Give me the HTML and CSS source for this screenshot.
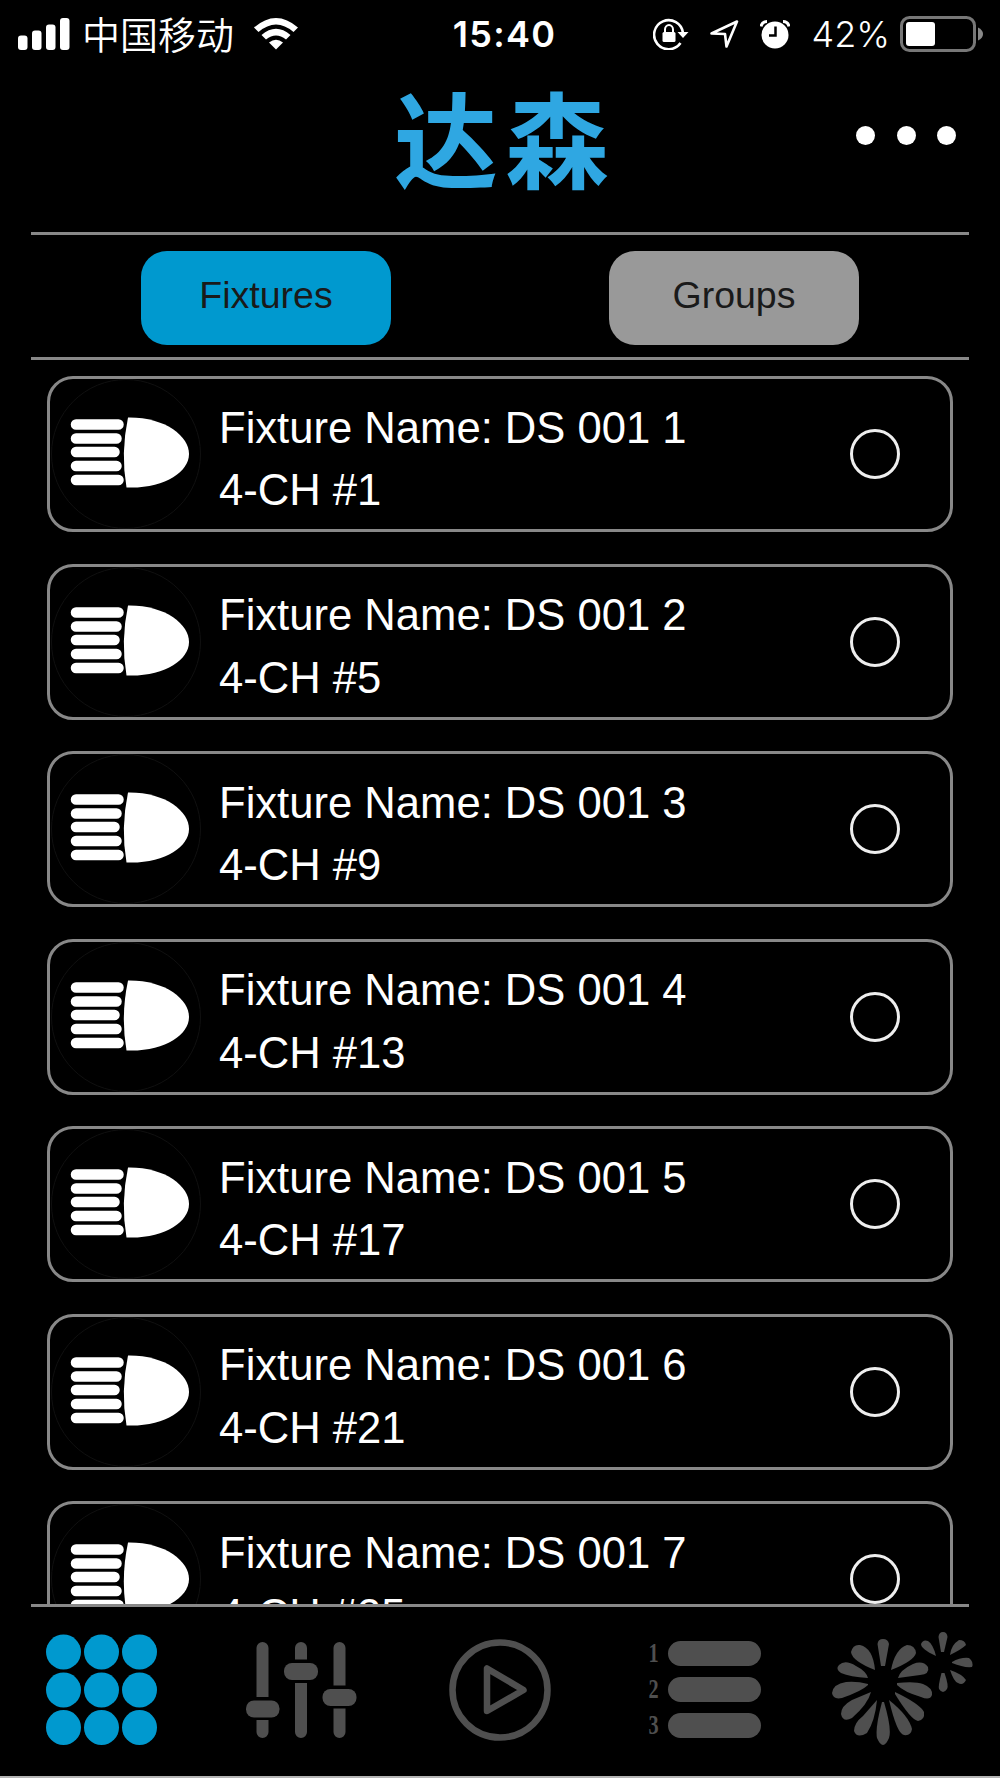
FILE: index.html
```html
<!DOCTYPE html>
<html lang="en">
<head>
    <meta charset="UTF-8">
    <meta name="viewport" content="width=device-width, initial-scale=1.0">
    <title>达森</title>
    <link rel="stylesheet" href="styles.css">
</head>
<body>
    <svg class="sprite" width="0" height="0">
        <symbol id="lamp" viewBox="0 0 150 150">
            <circle class="lamp-ring" cx="75" cy="75" r="74.5"/>
            <path class="lamp-beams" d="M25 45.500H67.500M25 59.500H65.500M25 73H63.500M25 87H65.500M25 101H67.500"/>
            <path d="M77 38.500C114 38 138 57 138 75C138 93 113 110 75.500 108.500Q69.500 74 77 38.500Z"/>
        </symbol>
    </svg>
    <div class="app">
        <div class="status-bar">
            <div class="status-left">
                <svg class="signal" width="52" height="32" viewBox="0 0 52 32">
                    <rect x="0" y="17.5" width="9.5" height="14.5" rx="3"/>
                    <rect x="14" y="12.5" width="9.5" height="19.5" rx="3"/>
                    <rect x="28" y="6.5" width="9.5" height="25.5" rx="3"/>
                    <rect x="42" y="0" width="9.5" height="32" rx="3"/>
                </svg>
                <span class="carrier">中国移动</span>
                <svg class="wifi" width="44" height="32" viewBox="0 0 44 32">
                    <path d="M0 9.5Q22 -9.5 44 9.5L39.5 14Q22 -1 4.500 14Z"/>
                    <path d="M7.500 17Q22 4.500 36.500 17L32 21.500Q22 13.500 12 21.500Z"/>
                    <path d="M15 24.500Q22 19 29 24.500L22 31.500Z"/>
                </svg>
            </div>
            <div class="time">15:40</div>
            <div class="status-right">
                <svg width="36" height="32" viewBox="0 0 36 32">
                    <path class="line" d="M27.500 25A14.500 14.500 0 1 1 30 15"/>
                    <path d="M24.500 14H35.500L30 20Z"/>
                    <rect x="9.500" y="14" width="13" height="10" rx="1.500"/>
                    <path class="line thin" d="M12 14V11.500A4 4.500 0 0 1 20 11.500V14"/>
                </svg>
                <svg class="location" width="29" height="29" viewBox="0 0 29 29">
                    <path class="line" d="M1.500 13.500L27 1.500L16.500 26.500L15 14Z"/>
                </svg>
                <svg class="alarm" width="30" height="29" viewBox="0 0 30 29">
                    <circle cx="15" cy="15" r="13.500"/>
                    <path d="M1 6.500Q2 1.500 7 1.500M29 6.500Q28 1.500 23 1.500"/>
                    <path class="hands" d="M15.500 6.500V15.500H9"/>
                </svg>
                <span class="percent">42%</span>
                <svg class="battery" width="84" height="36" viewBox="0 0 84 36">
                    <rect class="battery-case" x="1.500" y="1.500" width="73" height="33" rx="8"/>
                    <rect x="6" y="6" width="29" height="24" rx="3"/>
                    <path class="battery-tip" d="M78 11.500Q83 14 83 18Q83 22 78 24.500Z"/>
                </svg>
            </div>
        </div>

        <div class="header">
            <h1 class="logo">达森</h1>
            <div class="more">
                <span></span>
                <span></span>
                <span></span>
            </div>
        </div>

        <div class="tabs">
            <button class="tab active">Fixtures</button>
            <button class="tab">Groups</button>
        </div>

        <div class="fixture-list">
            <div class="fixture">
                <svg class="fixture-icon"><use href="#lamp"/></svg>
                <div class="fixture-text"><p>Fixture Name: DS 001 1</p><p>4-CH #1</p></div>
                <span class="radio"></span>
            </div>
            <div class="fixture">
                <svg class="fixture-icon"><use href="#lamp"/></svg>
                <div class="fixture-text"><p>Fixture Name: DS 001 2</p><p>4-CH #5</p></div>
                <span class="radio"></span>
            </div>
            <div class="fixture">
                <svg class="fixture-icon"><use href="#lamp"/></svg>
                <div class="fixture-text"><p>Fixture Name: DS 001 3</p><p>4-CH #9</p></div>
                <span class="radio"></span>
            </div>
            <div class="fixture">
                <svg class="fixture-icon"><use href="#lamp"/></svg>
                <div class="fixture-text"><p>Fixture Name: DS 001 4</p><p>4-CH #13</p></div>
                <span class="radio"></span>
            </div>
            <div class="fixture">
                <svg class="fixture-icon"><use href="#lamp"/></svg>
                <div class="fixture-text"><p>Fixture Name: DS 001 5</p><p>4-CH #17</p></div>
                <span class="radio"></span>
            </div>
            <div class="fixture">
                <svg class="fixture-icon"><use href="#lamp"/></svg>
                <div class="fixture-text"><p>Fixture Name: DS 001 6</p><p>4-CH #21</p></div>
                <span class="radio"></span>
            </div>
            <div class="fixture">
                <svg class="fixture-icon"><use href="#lamp"/></svg>
                <div class="fixture-text"><p>Fixture Name: DS 001 7</p><p>4-CH #25</p></div>
                <span class="radio"></span>
            </div>
        </div>

        <div class="nav">
            <svg class="nav-grid" width="112" height="112" viewBox="0 0 112 112">
                <circle cx="17.500" cy="18" r="17.500"/>
                <circle cx="55.500" cy="18" r="17.500"/>
                <circle cx="93.500" cy="18" r="17.500"/>
                <circle cx="17.500" cy="56" r="17.500"/>
                <circle cx="55.500" cy="56" r="17.500"/>
                <circle cx="93.500" cy="56" r="17.500"/>
                <circle cx="17.500" cy="93.500" r="17.500"/>
                <circle cx="55.500" cy="93.500" r="17.500"/>
                <circle cx="93.500" cy="93.500" r="17.500"/>
            </svg>
            <svg width="112" height="96" viewBox="0 0 112 96">
                <path d="M10.500 55V6a6 6 0 0 1 12 0V55ZM10.500 78H22.500V90a6 6 0 0 1 -12 0Z"/>
                <path d="M49 17.500V6a6 6 0 0 1 12 0V17.500ZM49 41H61V90a6 6 0 0 1 -12 0Z"/>
                <path d="M87.500 43.500V6a6 6 0 0 1 12 0V43.500ZM87.500 66.500H99.500V90a6 6 0 0 1 -12 0Z"/>
                <rect x="0" y="58.500" width="33.500" height="17" rx="8"/>
                <rect x="38" y="21" width="34" height="17" rx="8"/>
                <rect x="76.500" y="47" width="34" height="17" rx="8"/>
            </svg>
            <svg width="102" height="102" viewBox="0 0 102 102">
                <circle class="play" cx="51" cy="51" r="47.500"/>
                <path class="play" d="M38 29.500V72L74.500 51Z"/>
            </svg>
            <div class="scenes">
                <span>1</span><i></i>
                <span>2</span><i></i>
                <span>3</span><i></i>
            </div>
            <svg class="burst" width="142" height="116" viewBox="0 0 142 116">
                <path d="M49 34L45.500 12Q46 7 51 7Q56 7 57 12L53 34Z"/>
                <path d="M43 38Q20 29 19 20Q21 12 28 13Q41 16 43 38Z"/>
                <path d="M59 38Q63 17 75 13Q83 13 84 21Q82 29 59 38Z"/>
                <path d="M36 46Q18 45 9 41Q3 37 7 33Q13 27 24 34Q34 39 36 46Z"/>
                <path d="M66 46Q68 38 81 32Q91 28 96 35Q98 42 88 43Z"/>
                <path d="M36 53Q30 59 10 66Q1 68 0 61Q1 52 14 50Q25 49 36 52Z"/>
                <path d="M65 51Q83 49 91 52Q101 56 100 63Q98 69 89 65Q72 60 65 53Z"/>
                <path d="M39 60Q36 72 20 86Q11 91 9 82Q9 74 20 68Z"/>
                <path d="M63 60Q88 72 92 80Q93 88 86 89Q79 88 63 62Z"/>
                <path d="M45 68Q43 89 35 101Q25 107 22 99Q22 91 31 84Z"/>
                <path d="M57 68Q77 84 80 97Q79 104 72 103Q65 102 57 68Z"/>
                <path d="M50 70Q43 96 45 106Q51 120 57 106Q60 97 52 70Z"/>
                <path d="M109 20L106.500 5Q107 0 111 0Q115 0 115.500 5L112 20Z"/>
                <path d="M104 24Q89 17 89 12Q91 7 96 9Q101 12 104 24Z"/>
                <path d="M118 23Q119 13 127 8Q133 8 134 13Q130 17 118 23Z"/>
                <path d="M120 30Q129 25 137 26Q142 30 140 35Q132 36 120 31Z"/>
                <path d="M118 38Q130 42 134 48Q131 54 126 51Q122 50 118 38Z"/>
                <path d="M109.500 41Q106 54 107 57Q111 63 115 57Q117 54 112.500 41Z"/>
            </svg>
        </div>
    </div>
</body>
</html>
```
FILE: styles.css
```css
* {
    box-sizing: border-box;
}
body {
    margin: 0;
    background: #000;
    color: #fff;
    font-family: "Liberation Sans", Arial, sans-serif;
}
svg {
    display: block;
    flex: none;
    fill: #fff;
}
.sprite {
    position: absolute;
}
.app {
    height: 1778px;
    display: flex;
    flex-direction: column;
    border-bottom: 2px solid #b5b5b5;
    overflow: hidden;
}
.status-bar {
    height: 66px;
    padding: 0 16px 0 18px;
    display: grid;
    grid-template-columns: 1fr auto 1fr;
    align-items: center;
    font-family: Inter, "Noto Sans CJK SC", sans-serif;
    font-size: 36px;
    line-height: 66px;
}
.status-left,
.status-right {
    display: flex;
    align-items: center;
}
.status-right {
    justify-content: flex-end;
}
.carrier {
    margin-left: 12px;
    height: 68px;
    font-family: "Noto Sans CJK SC", sans-serif;
    font-size: 38px;
    font-weight: 350;
}
.wifi {
    margin-left: 20px;
}
.time {
    margin-left: 7px;
    font-weight: 600;
    letter-spacing: 1.3px;
}
.line {
    fill: none;
    stroke: #fff;
    stroke-width: 2.6;
    stroke-linejoin: round;
}
.thin {
    stroke-width: 2;
}
.location {
    margin-left: 21px;
}
.alarm {
    margin-left: 21px;
}
.alarm path {
    fill: none;
    stroke: #fff;
    stroke-width: 3;
}
.alarm .hands {
    stroke: #000;
    stroke-width: 2.5;
}
.percent {
    margin-left: 22px;
    font-weight: 350;
}
.battery {
    margin-left: 10px;
}
.battery-case {
    fill: none;
    stroke: #777;
    stroke-width: 3;
}
.battery-tip {
    fill: #888;
}
.header {
    height: 166px;
    margin: 0 31px;
    padding-right: 13px;
    display: grid;
    grid-template-columns: 1fr auto 1fr;
}
.logo {
    grid-column: 2;
    margin: 0 0 0 23px;
    font-family: "Noto Sans CJK SC", sans-serif;
    font-size: 104px;
    font-weight: 700;
    letter-spacing: 7px;
    line-height: 140px;
    color: #2fa7e2;
}
.more {
    display: flex;
    justify-content: flex-end;
    gap: 21.5px;
    padding-top: 60px;
}
.more span {
    width: 19px;
    height: 19px;
    border-radius: 50%;
    background: #fff;
}
.tabs {
    height: 128px;
    margin: 0 31px;
    padding: 3px 110px 0;
    display: flex;
    justify-content: space-between;
    align-items: center;
    border-top: 3px solid #888;
    border-bottom: 3px solid #888;
}
.tab {
    width: 250px;
    height: 94px;
    padding: 0 0 4px;
    border: 0;
    border-radius: 26px;
    background: #999;
    color: #1a1a1a;
    font-family: inherit;
    font-size: 37.5px;
}
.tab.active {
    background: #0099cf;
}
.fixture-list {
    height: 1244px;
    padding: 16px 47px 0;
    display: flex;
    flex-direction: column;
    gap: 31.5px;
    overflow: hidden;
}
.fixture {
    flex: none;
    height: 156px;
    display: flex;
    align-items: center;
    padding-right: 50px;
    border: 3px solid #888;
    border-radius: 26px;
}
.fixture-icon {
    width: 150px;
    height: 150px;
    margin-left: 1px;
}
.lamp-ring {
    fill: none;
    stroke: #101010;
}
.lamp-beams {
    stroke: #fff;
    stroke-width: 10.5;
    stroke-linecap: round;
}
.fixture-text {
    flex: 1;
    margin-left: 18px;
    padding-top: 10px;
    font-size: 43.6px;
    line-height: 62.5px;
}
.fixture-text p {
    margin: 0;
}
.radio {
    width: 50px;
    height: 50px;
    border: 3px solid #eee;
    border-radius: 50%;
}
.nav {
    flex: 1;
    margin: 0 31px;
    padding: 0 0 4px 15px;
    display: flex;
    align-items: center;
    border-top: 3px solid #888;
}
.nav svg {
    fill: #4f4f4f;
}
.nav .nav-grid {
    margin-right: 88px;
    fill: #0099cf;
}
.nav .play {
    fill: none;
    stroke: #4f4f4f;
    stroke-width: 6.5;
    stroke-linejoin: round;
}
.nav svg:nth-child(3) {
    margin-left: 91px;
}
.scenes {
    margin-left: 96px;
    display: grid;
    grid-template-columns: 12px 93px;
    column-gap: 9px;
    row-gap: 11px;
    align-items: center;
    color: #4f4f4f;
    font-family: "Liberation Serif", serif;
    font-size: 27px;
    font-weight: 700;
    line-height: 25px;
}
.scenes span {
    transform: scaleX(0.75);
}
.scenes i {
    height: 25px;
    border-radius: 13px;
    background: #4f4f4f;
}
.burst {
    margin-left: 71px;
}
```
